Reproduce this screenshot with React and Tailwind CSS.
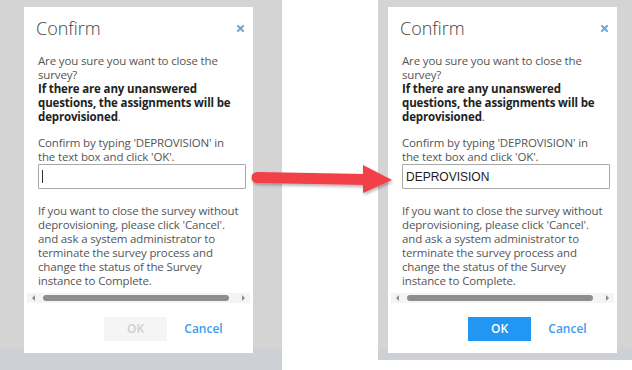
import React from 'react';

// Confirm dialog, shown twice: before and after typing the keyword
const lines1 = ['Are you sure you want to close the', 'survey?'];
const bold = ['If there are any unanswered', 'questions, the assignments will be'];
const lines2 = ["Confirm by typing 'DEPROVISION' in", "the text box and click 'OK'."];
const lines3 = [
  'If you want to close the survey without',
  "deprovisioning, please click 'Cancel'.",
  'and ask a system administrator to',
  'terminate the survey process and',
  'change the status of the Survey',
  'instance to Complete.',
];

const ConfirmDialog = ({ value, enabled }) => {
  return (
    <div className="w-[229px] h-[346px] bg-white flex flex-col font-['Open_Sans',sans-serif] text-[11.5px] tracking-[-0.15px] leading-[14px] text-[#555]">
      {/* Header */}
      <div className="flex items-center justify-between pl-[12px] pr-[9px] pt-[9px]">
        <div className="text-[18px] leading-[24px] tracking-normal font-light text-[#444]">Confirm</div>
        <svg className="w-[7px] h-[7px] mt-[1px]" viewBox="0 0 7 7">
          <path d="M1 1L6 6M6 1L1 6" stroke="#6fa6dc" strokeWidth="2" strokeLinecap="square" />
        </svg>
      </div>

      {/* Body */}
      <div className="pl-[14px] mt-[14px] whitespace-nowrap">
        {lines1.map((l) => <div key={l}>{l}</div>)}
        {bold.map((l) => <div key={l} className="font-bold text-[#222]">{l}</div>)}
        <div><span className="font-bold text-[#222]">deprovisioned</span>.</div>
      </div>

      <div className="pl-[14px] mt-[12px] whitespace-nowrap">
        {lines2.map((l) => <div key={l}>{l}</div>)}
      </div>

      <div className="pl-[14px]">
        <div className="w-[208px] h-[25px] border border-[#a8a8a8] rounded-[1px] flex items-center px-[3px] font-['Liberation_Sans',Arial,sans-serif] text-[12px] tracking-normal text-[#222]">
          {value ? value : <div className="w-px h-[13px] bg-[#333]" />}
        </div>
      </div>

      <div className="pl-[14px] mt-[15px] whitespace-nowrap">
        {lines3.map((l) => <div key={l}>{l}</div>)}
      </div>

      {/* Horizontal scrollbar */}
      <div className="mx-[3px] mt-[5px] h-[10px] bg-[#f4f4f4] flex items-center">
        <svg className="w-[3px] h-[6px] ml-[5px]" viewBox="0 0 3 6">
          <path d="M3 0L0 3L3 6Z" fill="#8c8c8c" />
        </svg>
        <div className="ml-[8px] w-[186px] h-[6px] rounded-full bg-[#8e8e8e]" />
        <svg className="w-[3px] h-[6px] ml-[13px]" viewBox="0 0 3 6">
          <path d="M0 0L3 3L0 6Z" fill="#8c8c8c" />
        </svg>
      </div>

      {/* Buttons */}
      <div className="mt-[14px] flex justify-end gap-[5px] pr-[18px]">
        <button
          className={`w-[63px] h-[24px] text-[12px] tracking-normal font-semibold ${
            enabled ? 'bg-[#2196f3] text-white' : 'bg-[#f5f5f5] text-[#cfcfcf]'
          }`}
        >
          OK
        </button>
        <button className="w-[63px] h-[24px] text-[12px] tracking-normal font-semibold text-[#3d9bf0]">Cancel</button>
      </div>
    </div>
  );
};

const App = () => {
  return (
    <div className="relative w-[632px] h-[370px] bg-white flex overflow-hidden">
      {/* Before */}
      <div className="w-[282px] h-[370px] pt-[7px] pl-[24px] bg-[linear-gradient(to_bottom,#d4d4d4_348px,#cdd1d6_348px)]">
        <ConfirmDialog value="" enabled={false} />
      </div>

      {/* After */}
      <div className="ml-[96px] w-[254px] h-[360px] pt-[7px] pl-[10px] bg-[linear-gradient(to_bottom,#d4d4d4_348px,#cdd1d6_348px)]">
        <ConfirmDialog value="DEPROVISION" enabled />
      </div>

      {/* Arrow overlay */}
      <svg className="absolute left-[245px] top-[158px] w-[160px] h-[45px]" viewBox="0 0 160 45">
        <defs>
          <filter id="sh" x="-10%" y="-30%" width="120%" height="180%">
            <feDropShadow dx="1" dy="2" stdDeviation="1.5" floodColor="#000" floodOpacity="0.3" />
          </filter>
        </defs>
        <g filter="url(#sh)" fill="#f2404a">
          <path d="M12 14L120 16L120 27L12 25A5.5 5.5 0 0 1 12 14Z" />
          <path d="M118 7L147 22L118 35Z" />
        </g>
      </svg>
    </div>
  );
};

export default App;
